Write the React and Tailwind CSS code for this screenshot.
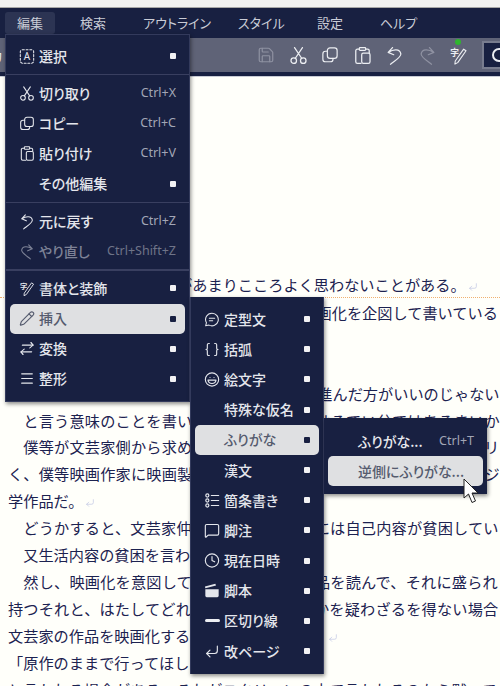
import { Save, Pencil, Menu as MenuIcon, Braces, Laugh, MessageSquare, Clock, CornerDownLeft, ArrowRightLeft } from 'lucide-react';

const Svg = ({ size = 16, className = '', children, sw = 1.6 }) => (
    <svg width={size} height={size} viewBox="0 0 24 24" fill="none" stroke="currentColor" strokeWidth={sw} strokeLinecap="round" strokeLinejoin="round" className={className}>
        {children}
    </svg>
);

const SelectIcon = (p) => (
    <Svg {...p}>
        <rect x="2" y="2" width="20" height="20" rx="3" strokeDasharray="3 2.6" />
        <text x="12" y="17.5" textAnchor="middle" fontSize="15" fill="currentColor" stroke="none" fontFamily="Noto Sans">A</text>
    </Svg>
);
const ScissorsIcon = (p) => (
    <Svg {...p}>
        <circle cx="6" cy="18.5" r="3.5" />
        <circle cx="18" cy="18.5" r="3.5" />
        <path d="M8 15.5 17 2M16 15.5 7 2" />
    </Svg>
);
const CopyIcon = (p) => (
    <Svg {...p}>
        <rect x="8.5" y="2.5" width="13" height="14" rx="3.5" />
        <path d="M8.5 7H6a3.5 3.5 0 0 0-3.5 3.5v7A3.5 3.5 0 0 0 6 21h6.5a3.5 3.5 0 0 0 3.5-3.5v-1" />
    </Svg>
);
const PasteIcon = (p) => (
    <Svg {...p}>
        <path d="M8 4H5.500a2 2 0 0 0-2 2v14a2 2 0 0 0 2 2H10M16 4h2.500a2 2 0 0 1 2 2v2.500" />
        <rect x="8" y="2" width="8" height="3.500" rx="1" />
        <rect x="11" y="9" width="10.500" height="13" rx="2" />
    </Svg>
);
const UndoIcon = (p) => (
    <Svg {...p}>
        <path d="M9.500 2 4 8l7 3M4.500 8C10 4 19 3 20 10c.5 4-8 9-13 13" />
    </Svg>
);
const RedoIcon = (p) => (
    <Svg {...p}>
        <path d="M14.500 2 20 8l-7 3M19.500 8C14 4 5 3 4 10c-.5 4 8 9 13 13" />
    </Svg>
);
const StyleIcon = (p) => (
    <Svg {...p} sw={1.4}>
        <text x="7" y="13" textAnchor="middle" fontSize="11" fontWeight="700" fill="currentColor" stroke="none" fontFamily="Noto Sans CJK JP">字</text>
        <path d="M21.500 6 11 21l-3.500 1.800.4-3.800L18.500 4z" />
    </Svg>
);
const SwapIcon = () => <ArrowRightLeft size={17} strokeWidth={1.7} className="-skew-x-12" />;
const TemplateIcon = (p) => (
    <Svg {...p}>
        <path d="M12 2.500a9.500 9.500 0 1 1-4.500 17.900L2.500 21.500l1.200-4.700A9.500 9.500 0 0 1 12 2.500z" />
        <path d="M8 10h8M8 14h5" />
    </Svg>
);
const ListIcon = (p) => (
    <Svg {...p} sw={1.8}>
        <circle cx="5" cy="4.500" r="2.300" />
        <circle cx="5" cy="12" r="2.300" />
        <circle cx="5" cy="19.500" r="2.300" />
        <path d="M11 4.500h11M11 12h11M11 19.500h11" />
    </Svg>
);
const ClapIcon = (p) => (
    <svg width={p.size || 16} height={p.size || 16} viewBox="0 0 24 24" fill="currentColor">
        <path d="M2 10h20v10a2 2 0 0 1-2 2H4a2 2 0 0 1-2-2z" />
        <path d="M2 8.500 1.500 6 17 2l1 2.500z" />
    </svg>
);
const RuleIcon = () => <div className="h-[3px] w-[15px] rounded-full bg-[#eceef2]" />;

const mainItems = [
    { icon: SelectIcon, label: '選択', sub: true },
    'sep',
    { icon: ScissorsIcon, label: '切り取り', key: 'Ctrl+X' },
    { icon: CopyIcon, label: 'コピー', key: 'Ctrl+C' },
    { icon: PasteIcon, label: '貼り付け', key: 'Ctrl+V' },
    { label: 'その他編集', sub: true },
    'sep',
    { icon: UndoIcon, label: '元に戻す', key: 'Ctrl+Z' },
    { icon: RedoIcon, label: 'やり直し', key: 'Ctrl+Shift+Z', off: true },
    'sep',
    { icon: StyleIcon, label: '書体と装飾', sub: true },
    { icon: Pencil, label: '挿入', sub: true, active: true },
    { icon: SwapIcon, label: '変換', sub: true },
    { icon: MenuIcon, label: '整形', sub: true },
];

const insertItems = [
    { icon: TemplateIcon, label: '定型文', sub: true },
    { icon: Braces, label: '括弧', sub: true },
    { icon: Laugh, label: '絵文字', sub: true },
    { label: '特殊な仮名', sub: true },
    { label: 'ふりがな', sub: true, active: true },
    { label: '漢文', sub: true },
    { icon: ListIcon, label: '箇条書き', sub: true },
    { icon: MessageSquare, label: '脚注', sub: true },
    { icon: Clock, label: '現在日時', sub: true },
    { icon: ClapIcon, label: '脚本', sub: true },
    { icon: RuleIcon, label: '区切り線', sub: true },
    { icon: CornerDownLeft, label: '改ページ', sub: true },
];

function MenuRow({ item }) {
    const Icon = item.icon;
    let rowColor = 'text-[#e4e6ec]';
    if (item.active) rowColor = 'bg-[#dfe0e2] text-[#555b6e] rounded-[5px]';
    if (item.off) rowColor = 'text-[#7d8296]';
    return (
        <div className={`h-[30.2px] flex items-center mx-[4px] pl-[9px] pr-[6px] ${rowColor}`}>
            <div className="w-[16px] h-[16px] flex items-center justify-center shrink-0">
                {Icon && <Icon size={17} strokeWidth={1.7} />}
            </div>
            <span className="ml-[4px] pb-[1px] text-[14px] font-medium leading-none whitespace-nowrap flex-1">{item.label}</span>
            {item.key && <span className={`mr-[3px] text-[12.500px] leading-none whitespace-nowrap font-['Noto_Sans',sans-serif] ${item.off ? 'text-[#6f7488]' : 'text-[#a2a6b6]'}`}>{item.key}</span>}
            {item.sub && <div className={`w-[6px] h-[6px] rounded-[1px] mr-[3px] ${item.active ? 'bg-[#182041]' : 'bg-[#f2f2f4]'}`} />}
        </div>
    );
}

const docLines = [
    { text: '　文芸家は自分達の作品があまりこころよく思わないことがある。', mark: true, first: true },
    { text: '　彼等の多くは自分達の作品に対して、又映画化を企図して書いている', wide: true },
    { text: '　' },
    { text: '　' },
    { text: '　もう少しこのまま文芸作品の方へ真直ぐに進んだ方がいいのじゃない', wide: true },
    { text: '　と言う意味のことを書いた人がある。これはるてい分ではあるまいか', track: true },
    { text: '　僕等が文芸家側から求められるものは、決して単なる映画のストーリ', track: true },
    { text: 'く、僕等映画作家に映画製作の上で提供される真の映画のためのオリジ', track: true },
    { text: '学作品だ。', mark: true },
    { text: '　どうかすると、文芸家仲間の或る作品の中には自己内容が貧困してい', track: true },
    { text: '　又生活内容の貧困を言わ' },
    { text: '　然し、映画化を意図して或る有名作家の作品を読んで、それに盛られ', track: true },
    { text: '持つそれと、はたしてどれだけの距離があるかを疑わざるを得ない場合', track: true },
    { text: '文芸家の作品を映画化する時に、その通りだ。', mark: true },
    { text: '「原作のままで行ってほし' },
    { text: 'と言われる場合がある。それがスクリーンの中で言われるのなら黙って', track: true },
];

const lineClass = (line) => {
    if (line.first) return 'pl-[10px] border-b border-dotted border-[#f0b070] h-[26.900px] -mt-[1px] mb-[1px]';
    if (line.wide) return 'pl-[14px]';
    if (line.track) return 'pl-[8px] tracking-[0.18px]';
    return 'pl-[8px]';
};

export default function App() {
    return (
        <div className="relative w-[500px] h-[686px] overflow-hidden bg-[#fffffa] font-['Noto_Sans_CJK_JP','Noto_Sans',sans-serif]">
            <div className="h-[7px] bg-[#f2f2f2]" />
            <div className="h-[1px] bg-[#a8a8a8]" />

            {/* menu bar */}
            <div className="h-[30px] pb-[2px] bg-[#182041] flex items-center text-[13px] text-[#c9ccd6] leading-none [font-feature-settings:'palt']">
                <span className="ml-[17px] w-[63px] shrink-0">編集</span>
                <span className="w-[63px] shrink-0">検索</span>
                <span className="w-[95px] shrink-0">アウトライン</span>
                <span className="w-[79px] shrink-0">スタイル</span>
                <span className="w-[63px] shrink-0">設定</span>
                <span className="shrink-0">ヘルプ</span>
            </div>

            {/* toolbar */}
            <div className="relative h-[34px] overflow-hidden bg-[#5f6377] flex items-center text-[#eceef2] pl-[250px]">
                <span className="absolute -left-[10px] top-[11px] text-[13px] leading-none">カ</span>
                <div className="w-[32px] shrink-0 flex justify-center text-[#8f92a2]"><Save size={18} strokeWidth={1.6} /></div>
                <div className="w-[32px] shrink-0 flex justify-center"><ScissorsIcon size={19} /></div>
                <div className="w-[32px] shrink-0 flex justify-center"><CopyIcon size={18} /></div>
                <div className="w-[32px] shrink-0 flex justify-center"><PasteIcon size={19} /></div>
                <div className="w-[33px] shrink-0 flex justify-center"><UndoIcon size={19} /></div>
                <div className="w-[32px] shrink-0 flex justify-center text-[#8f92a2]"><RedoIcon size={19} /></div>
                <div className="w-[30px] shrink-0 flex justify-center"><StyleIcon size={19} /></div>
                <div className="absolute left-[455px] top-[1px] w-[6px] h-[6px] rounded-full bg-[#2fb52f]" />
                <div className="ml-[9px] h-[28px] w-[40px] shrink-0 bg-[#182041] border-2 border-[#787c8e] flex items-center pl-[8px]">
                    <div className="w-[14px] h-[14px] rounded-full border-2 border-[#eceef2] shrink-0" />
                </div>
            </div>
            <div className="h-[5px] bg-[#182041] border-b border-[#c9ccd6]" />

            {/* document */}
            <div className="pt-[195px] text-[15.200px] leading-[26.900px] text-[#1c2250] whitespace-nowrap">
                {docLines.map((line, i) => (
                    <div key={i} className={lineClass(line)}>
                        {line.text}
                        {line.mark && <CornerDownLeft size={10} strokeWidth={1.5} className="inline ml-[2px] text-[#b9bfe0]" />}
                    </div>
                ))}
            </div>

            {/* 編集 menu */}
            <div className="absolute left-[5px] top-[12px] w-[50px] h-[22px] pb-[1px] rounded-[3px] bg-[#2c3453] flex items-center pl-[12px] text-[13px] text-[#c9ccd6] leading-none">編集</div>
            <div className="absolute left-[5px] top-[34px] w-[185px] pt-[6px] pb-[7px] bg-[#182041] border border-[#333a5c] shadow-[1px_2px_4px_rgba(0,0,0,0.45)] [font-feature-settings:'palt']">
                {mainItems.map((item, i) => item === 'sep'
                    ? <div key={i} className="h-[7px] flex items-center"><div className="h-[1.500px] w-full bg-[#393f60]" /></div>
                    : <MenuRow key={i} item={item} />)}
            </div>

            {/* 挿入 submenu */}
            <div className="absolute left-[190px] top-[297px] w-[134px] pt-[7px] pb-[8px] bg-[#182041] border-l border-r border-[#333a5c] shadow-[1px_2px_4px_rgba(0,0,0,0.45)] [font-feature-settings:'palt']">
                {insertItems.map((item, i) => <MenuRow key={i} item={item} />)}
            </div>

            {/* ふりがな submenu */}
            <div className="absolute left-[324px] top-[418px] w-[163px] py-[8px] bg-[#182041] shadow-[1px_2px_4px_rgba(0,0,0,0.45)] [font-feature-settings:'palt']">
                <div className="h-[30px] flex items-center mx-[4px] pl-[30px] pr-[9px] text-[#e8e9ee]">
                    <span className="text-[14px] font-medium leading-none flex-1">ふりがな...</span>
                    <span className="text-[12.500px] leading-none text-[#a2a6b6] font-['Noto_Sans',sans-serif]">Ctrl+T</span>
                </div>
                <div className="h-[30px] flex items-center mx-[4px] pl-[30px] rounded-[5px] bg-[#dfe0e2] text-[#555b6e]">
                    <span className="text-[14px] font-medium leading-none">逆側にふりがな...</span>
                </div>
            </div>

            {/* mouse cursor */}
            <svg width="18" height="27" viewBox="0 0 18 27" className="absolute left-[463px] top-[478px]">
                <path d="M1 1v19l4.500-4 3.500 8.500 3.500-1.500-3.500-8H15z" fill="#fff" stroke="#222" strokeWidth="1" strokeLinejoin="round" />
            </svg>
        </div>
    );
}
